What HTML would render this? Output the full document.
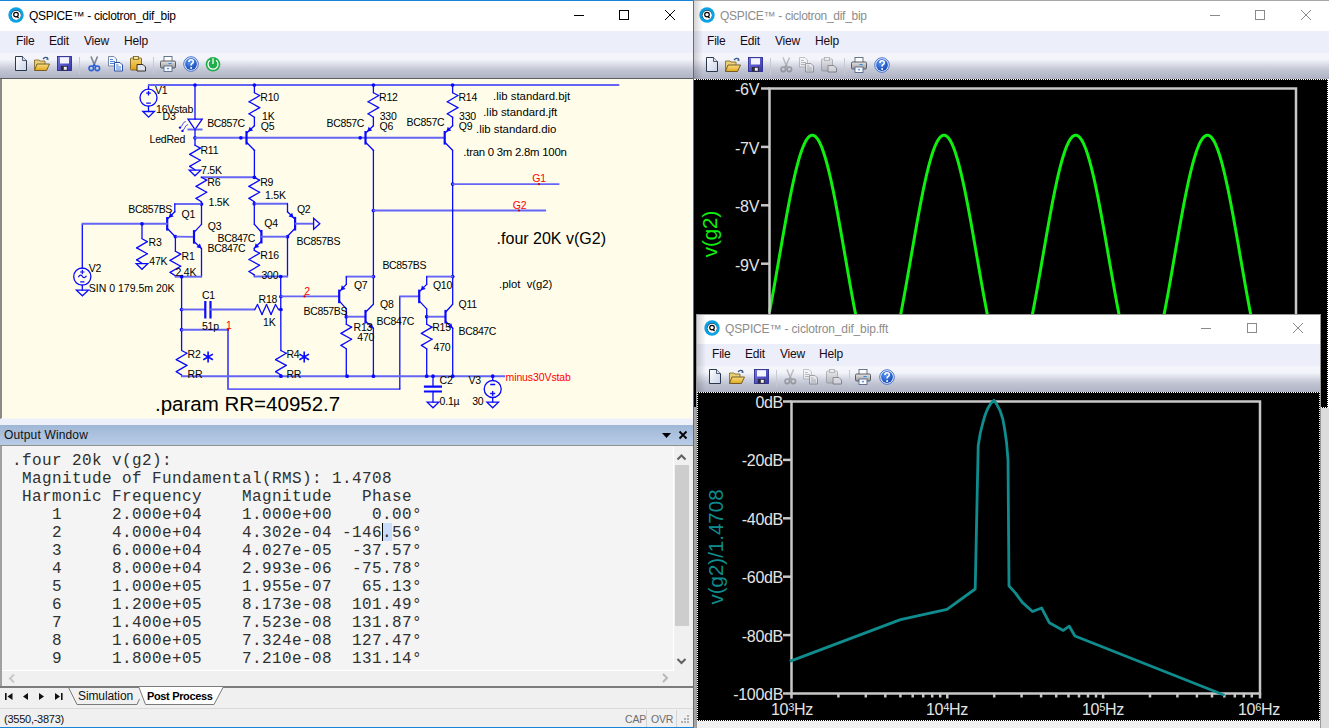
<!DOCTYPE html><html><head><meta charset="utf-8"><style>
*{margin:0;padding:0;box-sizing:border-box}
html,body{width:1329px;height:728px;overflow:hidden;background:#000;font-family:"Liberation Sans",sans-serif;position:relative}
.abs{position:absolute}
.title{position:absolute;font-size:12px;letter-spacing:-0.3px;white-space:nowrap;line-height:14px}
.menu{position:absolute;font-size:12px;letter-spacing:-0.2px;color:#1a0a14;white-space:nowrap;line-height:14px}
.toolbar{position:absolute;background:linear-gradient(#f4f6fb 0px,#f2f4fa 6.5px,#dadde7 11.5px,#c2c5d3 17px,#b1b4c5 25px)}
.mono{font-family:"Liberation Mono",monospace;font-size:16px;letter-spacing:0.4px;white-space:pre;color:#303030;position:absolute;line-height:18px}
.axl{position:absolute;color:#e4e4e4;font-size:16px;letter-spacing:-0.3px;white-space:nowrap;line-height:16px}
svg{position:absolute;overflow:visible}
</style></head><body>

<svg width="0" height="0" style="position:absolute">
<defs>
 <linearGradient id="gpage" x1="0" y1="0" x2="1" y2="1"><stop offset="0" stop-color="#ffffff"/><stop offset="1" stop-color="#c9d2e6"/></linearGradient>
 <linearGradient id="gfold" x1="0" y1="0" x2="0" y2="1"><stop offset="0" stop-color="#f7dc82"/><stop offset="1" stop-color="#e0a81c"/></linearGradient>
 <radialGradient id="ghelp" cx="0.4" cy="0.3" r="0.8"><stop offset="0" stop-color="#5a9af0"/><stop offset="1" stop-color="#0f3fb0"/></radialGradient>
 <linearGradient id="gsave" x1="0" y1="0" x2="1" y2="1"><stop offset="0" stop-color="#7a7ae0"/><stop offset="1" stop-color="#3434a8"/></linearGradient>
 <linearGradient id="gprint" x1="0" y1="0" x2="0" y2="1"><stop offset="0" stop-color="#e6e6e6"/><stop offset="1" stop-color="#9a9a9a"/></linearGradient>
 <linearGradient id="gclip" x1="0" y1="0" x2="0" y2="1"><stop offset="0" stop-color="#f4d774"/><stop offset="1" stop-color="#e3a10f"/></linearGradient>
 <symbol id="i-q" viewBox="0 0 16 16">
  <circle cx="8" cy="8" r="7.7" fill="#0aa2e4"/>
  <circle cx="8" cy="8" r="5.1" fill="#1a4a6a"/>
  <circle cx="8.2" cy="8.3" r="4.6" fill="#fff"/>
  <circle cx="8" cy="7.6" r="2.3" fill="none" stroke="#000" stroke-width="1.15"/>
  <path d="M8.9 9.3 L10.6 11" stroke="#000" stroke-width="1.2"/>
 </symbol>
 <symbol id="i-new" viewBox="0 0 16 16">
  <path d="M1.5 0.5 H8.5 L12.5 4.5 V14.5 H1.5 Z" fill="url(#gpage)" stroke="#29374f" stroke-width="1"/>
  <path d="M8.5 0.5 V4.5 H12.5" fill="#dfe5f0" stroke="#29374f" stroke-width="0.8"/>
 </symbol>
 <symbol id="i-open" viewBox="0 0 16 16">
  <path d="M0.5 4 H5 L6 5 H11 V14 H0.5 Z" fill="#e8cf7a" stroke="#8a6d2a" stroke-width="0.9"/>
  <path d="M3 8 H15.5 L12.5 14.5 H0.5 Z" fill="url(#gfold)" stroke="#6d5420" stroke-width="0.9"/>
  <path d="M9 3 Q11.5 0 14 2.5" fill="none" stroke="#3a5a8a" stroke-width="1.2"/>
  <path d="M13 1 L15 3.5 L12.5 4z" fill="#3a5a8a"/>
 </symbol>
 <symbol id="i-save" viewBox="0 0 16 16">
  <rect x="0.5" y="0.5" width="14" height="14" fill="url(#gsave)" stroke="#2e2e90" stroke-width="0.9"/>
  <rect x="3" y="1.2" width="9" height="6.3" fill="#f4f6ff"/>
  <rect x="3.8" y="10" width="7" height="4.5" fill="#2a2a3a"/>
  <rect x="6.8" y="10.8" width="3" height="3" fill="#f0f0f0"/>
 </symbol>
 <symbol id="i-cut" viewBox="0 0 16 16">
  <path d="M5 0.5 L8.5 9 M11.5 0.5 L8 9" stroke="#7b8190" stroke-width="1.6" fill="none"/>
  <circle cx="5.3" cy="12.3" r="2.3" fill="none" stroke="#2b5fd8" stroke-width="1.6"/>
  <circle cx="11.3" cy="12.3" r="2.3" fill="none" stroke="#2b5fd8" stroke-width="1.6"/>
  <path d="M6.5 10.5 L8.2 8.5 L10 10.5" stroke="#2b5fd8" stroke-width="1.4" fill="none"/>
 </symbol>
 <symbol id="i-copy" viewBox="0 0 16 16">
  <path d="M0.5 0.5 H6 L8.5 3 V10 H0.5 Z" fill="#f6f8fc" stroke="#6c7ea0" stroke-width="0.9"/>
  <path d="M2 3.5 H5 M2 5.5 H7 M2 7.5 H7" stroke="#3b78d8" stroke-width="0.9"/>
  <path d="M6.5 6.5 H12 L14.5 9 V15 H6.5 Z" fill="#f6f8fc" stroke="#2b4fa8" stroke-width="1"/>
  <path d="M8 9 H10.5 M8 11 H13 M8 13 H13" stroke="#3b78d8" stroke-width="0.9"/>
 </symbol>
 <symbol id="i-paste" viewBox="0 0 16 16">
  <rect x="0.5" y="2" width="11" height="12" rx="1" fill="url(#gclip)" stroke="#7a6020" stroke-width="0.9"/>
  <rect x="3.5" y="0.5" width="5" height="3" fill="#f4e49a" stroke="#6d5a20" stroke-width="0.8"/>
  <path d="M7 8.5 H13 L15.5 11 V15 H7 Z" fill="#dde4ef" stroke="#3a3020" stroke-width="1"/>
 </symbol>
 <symbol id="i-print" viewBox="0 0 16 16">
  <rect x="4" y="0.5" width="8" height="5" fill="#fff" stroke="#5a6a80" stroke-width="0.9"/>
  <rect x="0.5" y="5" width="15" height="7" rx="1.2" fill="url(#gprint)" stroke="#4a4e58" stroke-width="0.9"/>
  <rect x="8.5" y="7" width="3.2" height="1.1" fill="#3a8ad8"/>
  <rect x="4" y="10" width="8" height="5.5" fill="#f4f8ff" stroke="#5a6a88" stroke-width="0.9"/>
  <rect x="7.3" y="11.9" width="1.4" height="1.4" fill="#2a6ad8"/>
 </symbol>
 <symbol id="i-help" viewBox="0 0 16 16">
  <circle cx="8" cy="8" r="7.3" fill="#e8eefc" stroke="#3a66c8" stroke-width="0.9"/>
  <circle cx="8" cy="8" r="5.9" fill="url(#ghelp)"/>
  <path d="M5.9 6.1 Q5.9 3.7 8.1 3.7 Q10.3 3.7 10.3 5.8 Q10.3 7.1 8.8 7.8 Q8.1 8.2 8.1 9.6" fill="none" stroke="#fff" stroke-width="1.6"/>
  <circle cx="8.1" cy="11.9" r="1" fill="#fff"/>
 </symbol>
 <symbol id="i-power" viewBox="0 0 16 16">
  <circle cx="8" cy="8.3" r="7.3" fill="#1fae4a"/>
  <path d="M5 4.2 A5 5 0 1 0 11 4.2" fill="none" stroke="#fff" stroke-width="1.3"/>
  <path d="M8 2.2 V8" stroke="#fff" stroke-width="1.3"/>
 </symbol>
</defs></svg>

<div class="abs" style="left:694px;top:0;width:635px;height:728px;background:#fff"></div>
<div class="abs" style="left:694px;top:0;width:635px;height:1px;background:#a8a8a8"></div>
<svg style="left:699px;top:7px;opacity:1.0;" width="16" height="16" viewBox="0 0 16 16"><use href="#i-q"/></svg>
<div class="title" style="left:720px;top:9px;color:#8c8c8c">QSPICE™ - ciclotron_dif_bip</div>
<div class="abs" style="left:694px;top:31px;width:635px;height:22px;background:#eceef9"></div>
<div class="menu" style="left:707px;top:34px">File</div>
<div class="menu" style="left:740px;top:34px">Edit</div>
<div class="menu" style="left:775px;top:34px">View</div>
<div class="menu" style="left:815px;top:34px">Help</div>
<div class="toolbar" style="left:694px;top:53px;width:635px;height:26px"></div>
<div class="abs" style="left:694px;top:79px;width:634px;height:329px;background:#000;border-top:1px dotted #fff;border-right:1px dotted #fff;border-bottom:1px dotted #fff"></div>
<div class="abs" style="left:694px;top:408px;width:635px;height:320px;background:#dcdcdc"></div>
<div class="abs" style="left:694px;top:1px;width:9px;height:78px;background:linear-gradient(to right,rgba(0,0,20,0.17),rgba(0,0,20,0))"></div>
<svg style="left:0;top:0" width="1" height="1"><line x1="1210" y1="15.5" x2="1220" y2="15.5" stroke="#8a8a8a" stroke-width="1"/><rect x="1255.5" y="10.5" width="9" height="9" fill="none" stroke="#8a8a8a" stroke-width="1"/><path d="M1301 10 L1311 20 M1311 10 L1301 20" stroke="#8a8a8a" stroke-width="1"/></svg>
<svg style="left:705px;top:57px;opacity:1;" width="16" height="16" viewBox="0 0 16 16"><use href="#i-new"/></svg>
<svg style="left:725px;top:57px;opacity:1;" width="16" height="16" viewBox="0 0 16 16"><use href="#i-open"/></svg>
<svg style="left:747.5px;top:57px;opacity:1;" width="16" height="16" viewBox="0 0 16 16"><use href="#i-save"/></svg>
<svg style="left:777.5px;top:57px;opacity:0.45;filter:grayscale(1);" width="16" height="16" viewBox="0 0 16 16"><use href="#i-cut"/></svg>
<svg style="left:799px;top:57px;opacity:0.45;filter:grayscale(1);" width="16" height="16" viewBox="0 0 16 16"><use href="#i-copy"/></svg>
<svg style="left:821px;top:57px;opacity:0.45;filter:grayscale(1);" width="16" height="16" viewBox="0 0 16 16"><use href="#i-paste"/></svg>
<svg style="left:851px;top:57px;opacity:1;" width="16" height="16" viewBox="0 0 16 16"><use href="#i-print"/></svg>
<svg style="left:873.5px;top:57px;opacity:1;" width="16" height="16" viewBox="0 0 16 16"><use href="#i-help"/></svg>
<div class="abs" style="left:770px;top:58px;width:1px;height:17px;background:#c8cad2"></div>
<div class="abs" style="left:844px;top:58px;width:1px;height:17px;background:#c8cad2"></div>
<svg style="left:0;top:0" width="1" height="1">
<polyline points="769.5,311.8 770.5,306.6 771.5,301.3 772.5,295.8 773.5,290.3 774.5,284.7 775.5,279.0 776.5,273.3 777.5,267.5 778.5,261.8 779.5,256.0 780.5,250.2 781.5,244.4 782.5,238.6 783.5,232.9 784.5,227.3 785.5,221.7 786.5,216.2 787.5,210.8 788.5,205.5 789.5,200.3 790.5,195.2 791.5,190.3 792.5,185.5 793.5,180.9 794.5,176.5 795.5,172.2 796.5,168.1 797.5,164.3 798.5,160.6 799.5,157.2 800.5,154.0 801.5,151.0 802.5,148.3 803.5,145.8 804.5,143.5 805.5,141.6 806.5,139.8 807.5,138.4 808.5,137.2 809.5,136.3 810.5,135.7 811.5,135.3 812.5,135.2 813.5,135.4 814.5,135.9 815.5,136.6 816.5,137.7 817.5,138.9 818.5,140.5 819.5,142.3 820.5,144.4 821.5,146.7 822.5,149.3 823.5,152.2 824.5,155.2 825.5,158.5 826.5,162.0 827.5,165.8 828.5,169.7 829.5,173.9 830.5,178.2 831.5,182.7 832.5,187.4 833.5,192.2 834.5,197.2 835.5,202.3 836.5,207.6 837.5,212.9 838.5,218.4 839.5,223.9 840.5,229.5 841.5,235.2 842.5,240.9 843.5,246.7 844.5,252.5 845.5,258.3 846.5,264.1 847.5,269.9 848.5,275.6 849.5,281.3 850.5,286.9 851.5,292.5 852.5,298.0 853.5,303.4 854.5,308.7 855.5,313.9 856.5,318.9 857.5,323.8 858.5,328.6 859.5,333.2 860.5,337.6 861.5,341.8 862.5,345.8 863.5,349.7 864.5,353.3 865.5,356.7 866.5,359.9 867.5,362.8 868.5,365.5 869.5,368.0 870.5,370.2 871.5,372.1 872.5,373.8 873.5,375.2 874.5,376.3 875.5,377.2 876.5,377.8 877.5,378.1 878.5,378.1 879.5,377.9 880.5,377.4 881.5,376.6 882.5,375.6 883.5,374.2 884.5,372.6 885.5,370.8 886.5,368.7 887.5,366.3 888.5,363.7 889.5,360.8 890.5,357.7 891.5,354.3 892.5,350.8 893.5,347.0 894.5,343.0 895.5,338.9 896.5,334.5 897.5,330.0 898.5,325.3 899.5,320.4 900.5,315.4 901.5,310.3 902.5,305.0 903.5,299.6 904.5,294.2 905.5,288.6 906.5,283.0 907.5,277.3 908.5,271.6 909.5,265.8 910.5,260.0 911.5,254.2 912.5,248.4 913.5,242.7 914.5,236.9 915.5,231.2 916.5,225.6 917.5,220.0 918.5,214.6 919.5,209.2 920.5,203.9 921.5,198.7 922.5,193.7 923.5,188.8 924.5,184.1 925.5,179.5 926.5,175.2 927.5,171.0 928.5,166.9 929.5,163.1 930.5,159.6 931.5,156.2 932.5,153.0 933.5,150.1 934.5,147.5 935.5,145.1 936.5,142.9 937.5,141.0 938.5,139.4 939.5,138.0 940.5,136.9 941.5,136.1 942.5,135.5 943.5,135.3 944.5,135.3 945.5,135.5 946.5,136.1 947.5,136.9 948.5,138.0 949.5,139.4 950.5,141.0 951.5,142.9 952.5,145.1 953.5,147.5 954.5,150.1 955.5,153.0 956.5,156.2 957.5,159.6 958.5,163.1 959.5,166.9 960.5,171.0 961.5,175.2 962.5,179.5 963.5,184.1 964.5,188.8 965.5,193.7 966.5,198.7 967.5,203.9 968.5,209.2 969.5,214.6 970.5,220.0 971.5,225.6 972.5,231.2 973.5,236.9 974.5,242.7 975.5,248.4 976.5,254.2 977.5,260.0 978.5,265.8 979.5,271.6 980.5,277.3 981.5,283.0 982.5,288.6 983.5,294.2 984.5,299.6 985.5,305.0 986.5,310.3 987.5,315.4 988.5,320.4 989.5,325.3 990.5,330.0 991.5,334.5 992.5,338.9 993.5,343.0 994.5,347.0 995.5,350.8 996.5,354.3 997.5,357.7 998.5,360.8 999.5,363.7 1000.5,366.3 1001.5,368.7 1002.5,370.8 1003.5,372.6 1004.5,374.2 1005.5,375.6 1006.5,376.6 1007.5,377.4 1008.5,377.9 1009.5,378.1 1010.5,378.1 1011.5,377.8 1012.5,377.2 1013.5,376.3 1014.5,375.2 1015.5,373.8 1016.5,372.1 1017.5,370.2 1018.5,368.0 1019.5,365.5 1020.5,362.8 1021.5,359.9 1022.5,356.7 1023.5,353.3 1024.5,349.7 1025.5,345.8 1026.5,341.8 1027.5,337.6 1028.5,333.2 1029.5,328.6 1030.5,323.8 1031.5,318.9 1032.5,313.9 1033.5,308.7 1034.5,303.4 1035.5,298.0 1036.5,292.5 1037.5,286.9 1038.5,281.3 1039.5,275.6 1040.5,269.9 1041.5,264.1 1042.5,258.3 1043.5,252.5 1044.5,246.7 1045.5,240.9 1046.5,235.2 1047.5,229.5 1048.5,223.9 1049.5,218.4 1050.5,212.9 1051.5,207.6 1052.5,202.3 1053.5,197.2 1054.5,192.2 1055.5,187.4 1056.5,182.7 1057.5,178.2 1058.5,173.9 1059.5,169.7 1060.5,165.8 1061.5,162.0 1062.5,158.5 1063.5,155.2 1064.5,152.2 1065.5,149.3 1066.5,146.7 1067.5,144.4 1068.5,142.3 1069.5,140.5 1070.5,138.9 1071.5,137.7 1072.5,136.6 1073.5,135.9 1074.5,135.4 1075.5,135.2 1076.5,135.3 1077.5,135.7 1078.5,136.3 1079.5,137.2 1080.5,138.4 1081.5,139.8 1082.5,141.6 1083.5,143.5 1084.5,145.8 1085.5,148.3 1086.5,151.0 1087.5,154.0 1088.5,157.2 1089.5,160.6 1090.5,164.3 1091.5,168.1 1092.5,172.2 1093.5,176.5 1094.5,180.9 1095.5,185.5 1096.5,190.3 1097.5,195.2 1098.5,200.3 1099.5,205.5 1100.5,210.8 1101.5,216.2 1102.5,221.7 1103.5,227.3 1104.5,232.9 1105.5,238.6 1106.5,244.4 1107.5,250.2 1108.5,256.0 1109.5,261.8 1110.5,267.5 1111.5,273.3 1112.5,279.0 1113.5,284.7 1114.5,290.3 1115.5,295.8 1116.5,301.3 1117.5,306.6 1118.5,311.8 1119.5,316.9 1120.5,321.9 1121.5,326.7 1122.5,331.4 1123.5,335.8 1124.5,340.1 1125.5,344.3 1126.5,348.2 1127.5,351.9 1128.5,355.4 1129.5,358.6 1130.5,361.7 1131.5,364.5 1132.5,367.0 1133.5,369.3 1134.5,371.4 1135.5,373.1 1136.5,374.7 1137.5,375.9 1138.5,376.9 1139.5,377.6 1140.5,378.0 1141.5,378.2 1142.5,378.0 1143.5,377.6 1144.5,377.0 1145.5,376.0 1146.5,374.8 1147.5,373.3 1148.5,371.5 1149.5,369.5 1150.5,367.3 1151.5,364.7 1152.5,362.0 1153.5,359.0 1154.5,355.7 1155.5,352.2 1156.5,348.6 1157.5,344.7 1158.5,340.6 1159.5,336.3 1160.5,331.8 1161.5,327.2 1162.5,322.4 1163.5,317.4 1164.5,312.3 1165.5,307.1 1166.5,301.8 1167.5,296.4 1168.5,290.9 1169.5,285.3 1170.5,279.6 1171.5,273.9 1172.5,268.1 1173.5,262.3 1174.5,256.5 1175.5,250.8 1176.5,245.0 1177.5,239.2 1178.5,233.5 1179.5,227.8 1180.5,222.3 1181.5,216.7 1182.5,211.3 1183.5,206.0 1184.5,200.8 1185.5,195.7 1186.5,190.8 1187.5,186.0 1188.5,181.3 1189.5,176.9 1190.5,172.6 1191.5,168.5 1192.5,164.6 1193.5,161.0 1194.5,157.5 1195.5,154.3 1196.5,151.3 1197.5,148.5 1198.5,146.0 1199.5,143.7 1200.5,141.7 1201.5,140.0 1202.5,138.5 1203.5,137.3 1204.5,136.4 1205.5,135.7 1206.5,135.3 1207.5,135.2 1208.5,135.4 1209.5,135.8 1210.5,136.5 1211.5,137.5 1212.5,138.8 1213.5,140.3 1214.5,142.1 1215.5,144.2 1216.5,146.5 1217.5,149.1 1218.5,151.9 1219.5,154.9 1220.5,158.2 1221.5,161.7 1222.5,165.4 1223.5,169.3 1224.5,173.5 1225.5,177.8 1226.5,182.3 1227.5,186.9 1228.5,191.7 1229.5,196.7 1230.5,201.8 1231.5,207.0 1232.5,212.4 1233.5,217.8 1234.5,223.4 1235.5,229.0 1236.5,234.6 1237.5,240.4 1238.5,246.1 1239.5,251.9 1240.5,257.7 1241.5,263.5 1242.5,269.3 1243.5,275.0 1244.5,280.7 1245.5,286.4 1246.5,292.0 1247.5,297.5 1248.5,302.9 1249.5,308.2 1250.5,313.4 1251.5,318.4 1252.5,323.3 1253.5,328.1 1254.5,332.7 1255.5,337.2 1256.5,341.4 1257.5,345.5 1258.5,349.3 1259.5,353.0 1260.5,356.4 1261.5,359.6 1262.5,362.5 1263.5,365.3 1264.5,367.7 1265.5,370.0 1266.5,371.9 1267.5,373.6 1268.5,375.1 1269.5,376.2 1270.5,377.1 1271.5,377.7 1272.5,378.1 1273.5,378.2 1274.5,377.9 1275.5,377.5 1276.5,376.7 1277.5,375.7 1278.5,374.4 1279.5,372.8 1280.5,371.0 1281.5,368.9 1282.5,366.5 1283.5,363.9 1284.5,361.1 1285.5,358.0 1286.5,354.7 1287.5,351.2 1288.5,347.4 1289.5,343.5 1290.5,339.3 1291.5,335.0 1292.5,330.4 1293.5,325.8 1294.5,320.9 1295.5,315.9" fill="none" stroke="#10f010" stroke-width="3" stroke-linejoin="round"/>
<path d="M769.5 330 V88.5 H1296 V330" fill="none" stroke="#c8c8c8" stroke-width="2.5"/>
<line x1="761" y1="88.5" x2="769.5" y2="88.5" stroke="#c8c8c8" stroke-width="2.5"/>
<line x1="761" y1="146.9" x2="769.5" y2="146.9" stroke="#c8c8c8" stroke-width="2.5"/>
<line x1="761" y1="205.3" x2="769.5" y2="205.3" stroke="#c8c8c8" stroke-width="2.5"/>
<line x1="761" y1="263.7" x2="769.5" y2="263.7" stroke="#c8c8c8" stroke-width="2.5"/>
<line x1="761" y1="322.1" x2="769.5" y2="322.1" stroke="#c8c8c8" stroke-width="2.5"/>
</svg>
<div class="axl" style="right:570px;top:82px;text-align:right">-6V</div>
<div class="axl" style="right:570px;top:141px;text-align:right">-7V</div>
<div class="axl" style="right:570px;top:199px;text-align:right">-8V</div>
<div class="axl" style="right:570px;top:258px;text-align:right">-9V</div>
<div class="abs" style="left:700px;top:234px;width:20px;height:1px"><div style="position:absolute;left:-30px;top:-10px;width:80px;text-align:center;transform:rotate(-90deg);color:#10f010;font-size:20.5px;line-height:20px;white-space:nowrap">v(g2)</div></div>
<div class="abs" style="left:0;top:0;width:694px;height:728px;background:#fff"></div>
<div class="abs" style="left:0;top:0;width:694px;height:1px;background:#1883d7"></div>
<div class="abs" style="left:693px;top:0;width:1px;height:728px;background:#1883d7"></div>
<div class="abs" style="left:0;top:727px;width:694px;height:1px;background:#1883d7"></div>
<svg style="left:8px;top:7px;opacity:1.0;" width="16" height="16" viewBox="0 0 16 16"><use href="#i-q"/></svg>
<div class="title" style="left:29px;top:9px;color:#000">QSPICE™ - ciclotron_dif_bip</div>
<svg style="left:0;top:0" width="1" height="1"><line x1="574" y1="15.5" x2="584" y2="15.5" stroke="#000" stroke-width="1"/><rect x="619.5" y="10.5" width="9" height="9" fill="none" stroke="#000" stroke-width="1"/><path d="M665 10 L675 20 M675 10 L665 20" stroke="#000" stroke-width="1"/></svg>
<div class="abs" style="left:0;top:31px;width:693px;height:22px;background:#eceef9"></div>
<div class="menu" style="left:16px;top:34px">File</div>
<div class="menu" style="left:49px;top:34px">Edit</div>
<div class="menu" style="left:84px;top:34px">View</div>
<div class="menu" style="left:124px;top:34px">Help</div>
<div class="toolbar" style="left:0;top:53px;width:693px;height:25px"></div>
<div class="abs" style="left:0;top:78px;width:693px;height:1px;background:#5e5e62"></div>
<svg style="left:13.5px;top:56px;opacity:1.0;" width="16" height="16" viewBox="0 0 16 16"><use href="#i-new"/></svg>
<svg style="left:34px;top:56px;opacity:1.0;" width="16" height="16" viewBox="0 0 16 16"><use href="#i-open"/></svg>
<svg style="left:56.5px;top:56px;opacity:1.0;" width="16" height="16" viewBox="0 0 16 16"><use href="#i-save"/></svg>
<svg style="left:86px;top:56px;opacity:1.0;" width="16" height="16" viewBox="0 0 16 16"><use href="#i-cut"/></svg>
<svg style="left:107.5px;top:56px;opacity:1.0;" width="16" height="16" viewBox="0 0 16 16"><use href="#i-copy"/></svg>
<svg style="left:129.5px;top:56px;opacity:1.0;" width="16" height="16" viewBox="0 0 16 16"><use href="#i-paste"/></svg>
<svg style="left:159.5px;top:56px;opacity:1.0;" width="16" height="16" viewBox="0 0 16 16"><use href="#i-print"/></svg>
<svg style="left:182.5px;top:56px;opacity:1.0;" width="16" height="16" viewBox="0 0 16 16"><use href="#i-help"/></svg>
<svg style="left:204.5px;top:56px;opacity:1.0;" width="16" height="16" viewBox="0 0 16 16"><use href="#i-power"/></svg>
<div class="abs" style="left:79px;top:57px;width:1px;height:17px;background:#c8cad2"></div>
<div class="abs" style="left:153px;top:57px;width:1px;height:17px;background:#c8cad2"></div>
<div class="abs" style="left:0;top:79px;width:693px;height:340px;background:#fffdea;border-left:2px solid #8a8a8a;border-right:2px solid #fbfbfb;border-bottom:1px solid #f6f6f6"></div>
<svg style="left:0;top:0" width="1" height="1" font-family="Liberation Sans, sans-serif"><line x1="148.5" y1="89.2" x2="148.5" y2="85.0" stroke="#0a0aff" stroke-width="1.3" stroke-linecap="round"/>
<line x1="148.0" y1="85.0" x2="619.3" y2="85.0" stroke="#6464f6" stroke-width="1.9"/>
<circle cx="195.0" cy="85.0" r="1.85" fill="#0a0aff"/>
<circle cx="254.4" cy="85.0" r="1.85" fill="#0a0aff"/>
<circle cx="373.4" cy="85.0" r="1.85" fill="#0a0aff"/>
<circle cx="452.6" cy="85.0" r="1.85" fill="#0a0aff"/>
<circle cx="148.5" cy="97.7" r="8.5" fill="none" stroke="#0a0aff" stroke-width="1.3"/>
<path d="M146.2 93.2 H150.8 M148.5 90.9 V95.5 M146.2 103.1 H150.8" stroke="#0a0aff" stroke-width="1.3"/>
<line x1="148.5" y1="106.2" x2="148.5" y2="111.5" stroke="#0a0aff" stroke-width="1.3" stroke-linecap="round"/>
<path d="M142.8 111.5 H154.4 L148.6 117.1 Z" fill="none" stroke="#0a0aff" stroke-width="1.3" stroke-linejoin="miter"/>
<line x1="195.0" y1="85.0" x2="195.0" y2="119.2" stroke="#0a0aff" stroke-width="1.3" stroke-linecap="round"/>
<path d="M188 119.2 H202.2 L195 129.5 Z" fill="none" stroke="#0a0aff" stroke-width="1.3"/>
<line x1="187.5" y1="129.5" x2="202.5" y2="129.5" stroke="#6464f6" stroke-width="1.9"/>
<line x1="195.0" y1="129.5" x2="195.0" y2="145.3" stroke="#0a0aff" stroke-width="1.3" stroke-linecap="round"/>
<circle cx="195.0" cy="137.8" r="1.85" fill="#0a0aff"/>
<path d="M185.8 121.5 C182.3 121.8 183.2 126 180.2 127.4 M188 124.6 C184.8 125 185.3 129 182.6 130.6" fill="none" stroke="#0a0aff" stroke-width="1" opacity="0.7"/><circle cx="180" cy="127.6" r="1.2" fill="#0a0aff"/><circle cx="182.5" cy="130.9" r="1.2" fill="#0a0aff"/>
<line x1="195.0" y1="145.3" x2="200.3" y2="148.1" stroke="#0a0aff" stroke-width="1.3" stroke-linecap="round"/>
<line x1="200.3" y1="148.1" x2="189.7" y2="154.4" stroke="#0a0aff" stroke-width="1.3" stroke-linecap="round"/>
<line x1="189.7" y1="154.4" x2="200.3" y2="160.2" stroke="#0a0aff" stroke-width="1.3" stroke-linecap="round"/>
<line x1="200.3" y1="160.2" x2="189.7" y2="166.4" stroke="#0a0aff" stroke-width="1.3" stroke-linecap="round"/>
<line x1="189.7" y1="166.4" x2="195.0" y2="169.8" stroke="#0a0aff" stroke-width="1.3" stroke-linecap="round"/>
<path d="M189.2 170.2 H200.8 L195.0 175.8 Z" fill="none" stroke="#0a0aff" stroke-width="1.3" stroke-linejoin="miter"/>
<line x1="194.5" y1="137.8" x2="445.1" y2="137.8" stroke="#6464f6" stroke-width="1.9"/>
<circle cx="240.9" cy="137.8" r="1.85" fill="#0a0aff"/>
<circle cx="360.2" cy="137.8" r="1.85" fill="#0a0aff"/>
<line x1="254.4" y1="85.0" x2="254.4" y2="92.7" stroke="#0a0aff" stroke-width="1.3" stroke-linecap="round"/>
<line x1="254.4" y1="92.7" x2="259.7" y2="95.5" stroke="#0a0aff" stroke-width="1.3" stroke-linecap="round"/>
<line x1="259.7" y1="95.5" x2="249.1" y2="101.8" stroke="#0a0aff" stroke-width="1.3" stroke-linecap="round"/>
<line x1="249.1" y1="101.8" x2="259.7" y2="107.6" stroke="#0a0aff" stroke-width="1.3" stroke-linecap="round"/>
<line x1="259.7" y1="107.6" x2="249.1" y2="113.8" stroke="#0a0aff" stroke-width="1.3" stroke-linecap="round"/>
<line x1="249.1" y1="113.8" x2="254.4" y2="117.2" stroke="#0a0aff" stroke-width="1.3" stroke-linecap="round"/>
<line x1="254.4" y1="117.2" x2="254.4" y2="125.8" stroke="#0a0aff" stroke-width="1.3" stroke-linecap="round"/>
<line x1="246.5" y1="131.0" x2="246.5" y2="144.6" stroke="#0a0aff" stroke-width="2.2"/>
<line x1="246.5" y1="133.3" x2="254.4" y2="125.8" stroke="#0a0aff" stroke-width="1.3" stroke-linecap="round"/>
<line x1="246.5" y1="142.3" x2="254.4" y2="150.3" stroke="#0a0aff" stroke-width="1.3" stroke-linecap="round"/>
<path d="M248.1 131.8 L249.6 126.8 L253.1 130.6 Z" fill="#0a0aff"/>
<line x1="373.4" y1="85.0" x2="373.4" y2="92.7" stroke="#0a0aff" stroke-width="1.3" stroke-linecap="round"/>
<line x1="373.4" y1="92.7" x2="378.7" y2="95.5" stroke="#0a0aff" stroke-width="1.3" stroke-linecap="round"/>
<line x1="378.7" y1="95.5" x2="368.1" y2="101.8" stroke="#0a0aff" stroke-width="1.3" stroke-linecap="round"/>
<line x1="368.1" y1="101.8" x2="378.7" y2="107.6" stroke="#0a0aff" stroke-width="1.3" stroke-linecap="round"/>
<line x1="378.7" y1="107.6" x2="368.1" y2="113.8" stroke="#0a0aff" stroke-width="1.3" stroke-linecap="round"/>
<line x1="368.1" y1="113.8" x2="373.4" y2="117.2" stroke="#0a0aff" stroke-width="1.3" stroke-linecap="round"/>
<line x1="373.4" y1="117.2" x2="373.4" y2="125.8" stroke="#0a0aff" stroke-width="1.3" stroke-linecap="round"/>
<line x1="365.5" y1="131.0" x2="365.5" y2="144.6" stroke="#0a0aff" stroke-width="2.2"/>
<line x1="365.5" y1="133.3" x2="373.4" y2="125.8" stroke="#0a0aff" stroke-width="1.3" stroke-linecap="round"/>
<line x1="365.5" y1="142.3" x2="373.4" y2="150.3" stroke="#0a0aff" stroke-width="1.3" stroke-linecap="round"/>
<path d="M367.1 131.8 L368.6 126.8 L372.1 130.6 Z" fill="#0a0aff"/>
<line x1="452.6" y1="85.0" x2="452.6" y2="92.7" stroke="#0a0aff" stroke-width="1.3" stroke-linecap="round"/>
<line x1="452.6" y1="92.7" x2="457.9" y2="95.5" stroke="#0a0aff" stroke-width="1.3" stroke-linecap="round"/>
<line x1="457.9" y1="95.5" x2="447.3" y2="101.8" stroke="#0a0aff" stroke-width="1.3" stroke-linecap="round"/>
<line x1="447.3" y1="101.8" x2="457.9" y2="107.6" stroke="#0a0aff" stroke-width="1.3" stroke-linecap="round"/>
<line x1="457.9" y1="107.6" x2="447.3" y2="113.8" stroke="#0a0aff" stroke-width="1.3" stroke-linecap="round"/>
<line x1="447.3" y1="113.8" x2="452.6" y2="117.2" stroke="#0a0aff" stroke-width="1.3" stroke-linecap="round"/>
<line x1="452.6" y1="117.2" x2="452.6" y2="125.8" stroke="#0a0aff" stroke-width="1.3" stroke-linecap="round"/>
<line x1="444.7" y1="131.0" x2="444.7" y2="144.6" stroke="#0a0aff" stroke-width="2.2"/>
<line x1="444.7" y1="133.3" x2="452.6" y2="125.8" stroke="#0a0aff" stroke-width="1.3" stroke-linecap="round"/>
<line x1="444.7" y1="142.3" x2="452.6" y2="150.3" stroke="#0a0aff" stroke-width="1.3" stroke-linecap="round"/>
<path d="M446.3 131.8 L447.8 126.8 L451.3 130.6 Z" fill="#0a0aff"/>
<line x1="254.4" y1="150.3" x2="254.4" y2="177.3" stroke="#0a0aff" stroke-width="1.3" stroke-linecap="round"/>
<line x1="200.7" y1="177.3" x2="254.9" y2="177.3" stroke="#6464f6" stroke-width="1.9"/>
<circle cx="254.4" cy="177.3" r="1.85" fill="#0a0aff"/>
<line x1="201.4" y1="177.3" x2="206.7" y2="180.1" stroke="#0a0aff" stroke-width="1.3" stroke-linecap="round"/>
<line x1="206.7" y1="180.1" x2="196.1" y2="186.4" stroke="#0a0aff" stroke-width="1.3" stroke-linecap="round"/>
<line x1="196.1" y1="186.4" x2="206.7" y2="192.2" stroke="#0a0aff" stroke-width="1.3" stroke-linecap="round"/>
<line x1="206.7" y1="192.2" x2="196.1" y2="198.4" stroke="#0a0aff" stroke-width="1.3" stroke-linecap="round"/>
<line x1="196.1" y1="198.4" x2="201.4" y2="201.8" stroke="#0a0aff" stroke-width="1.3" stroke-linecap="round"/>
<line x1="201.4" y1="201.8" x2="201.5" y2="204.0" stroke="#0a0aff" stroke-width="1.3" stroke-linecap="round"/>
<circle cx="201.5" cy="204.0" r="1.85" fill="#0a0aff"/>
<line x1="254.3" y1="177.3" x2="259.6" y2="180.1" stroke="#0a0aff" stroke-width="1.3" stroke-linecap="round"/>
<line x1="259.6" y1="180.1" x2="249.0" y2="186.4" stroke="#0a0aff" stroke-width="1.3" stroke-linecap="round"/>
<line x1="249.0" y1="186.4" x2="259.6" y2="192.2" stroke="#0a0aff" stroke-width="1.3" stroke-linecap="round"/>
<line x1="259.6" y1="192.2" x2="249.0" y2="198.4" stroke="#0a0aff" stroke-width="1.3" stroke-linecap="round"/>
<line x1="249.0" y1="198.4" x2="254.3" y2="201.8" stroke="#0a0aff" stroke-width="1.3" stroke-linecap="round"/>
<line x1="254.3" y1="201.8" x2="254.3" y2="203.7" stroke="#0a0aff" stroke-width="1.3" stroke-linecap="round"/>
<circle cx="254.3" cy="203.7" r="1.85" fill="#0a0aff"/>
<line x1="174.3" y1="204.0" x2="202.0" y2="204.0" stroke="#6464f6" stroke-width="1.9"/>
<line x1="174.8" y1="204.0" x2="174.8" y2="211.8" stroke="#0a0aff" stroke-width="1.3" stroke-linecap="round"/>
<line x1="167.2" y1="217.0" x2="167.2" y2="230.6" stroke="#0a0aff" stroke-width="2.2"/>
<line x1="167.2" y1="219.3" x2="174.8" y2="211.8" stroke="#0a0aff" stroke-width="1.3" stroke-linecap="round"/>
<line x1="167.2" y1="228.3" x2="174.8" y2="236.3" stroke="#0a0aff" stroke-width="1.3" stroke-linecap="round"/>
<path d="M168.7 217.8 L170.1 212.8 L173.7 216.5 Z" fill="#0a0aff"/>
<circle cx="175.4" cy="236.6" r="1.85" fill="#0a0aff"/>
<line x1="174.9" y1="236.6" x2="194.5" y2="236.9" stroke="#6464f6" stroke-width="1.9"/>
<line x1="194.0" y1="230.1" x2="194.0" y2="243.7" stroke="#0a0aff" stroke-width="2.2"/>
<line x1="194.0" y1="232.4" x2="201.5" y2="224.4" stroke="#0a0aff" stroke-width="1.3" stroke-linecap="round"/>
<line x1="194.0" y1="241.4" x2="201.5" y2="248.4" stroke="#0a0aff" stroke-width="1.3" stroke-linecap="round"/>
<path d="M201.5 248.4 L196.4 247.2 L200.0 243.4 Z" fill="#0a0aff"/>
<line x1="201.5" y1="224.4" x2="201.5" y2="204.0" stroke="#0a0aff" stroke-width="1.3" stroke-linecap="round"/>
<line x1="201.5" y1="248.4" x2="201.5" y2="276.7" stroke="#0a0aff" stroke-width="1.3" stroke-linecap="round"/>
<line x1="175.4" y1="236.6" x2="175.4" y2="251.3" stroke="#0a0aff" stroke-width="1.3" stroke-linecap="round"/>
<line x1="175.4" y1="251.3" x2="180.7" y2="254.1" stroke="#0a0aff" stroke-width="1.3" stroke-linecap="round"/>
<line x1="180.7" y1="254.1" x2="170.1" y2="260.4" stroke="#0a0aff" stroke-width="1.3" stroke-linecap="round"/>
<line x1="170.1" y1="260.4" x2="180.7" y2="266.2" stroke="#0a0aff" stroke-width="1.3" stroke-linecap="round"/>
<line x1="180.7" y1="266.2" x2="170.1" y2="272.4" stroke="#0a0aff" stroke-width="1.3" stroke-linecap="round"/>
<line x1="170.1" y1="272.4" x2="175.4" y2="275.8" stroke="#0a0aff" stroke-width="1.3" stroke-linecap="round"/>
<line x1="175.4" y1="275.8" x2="175.4" y2="276.7" stroke="#0a0aff" stroke-width="1.3" stroke-linecap="round"/>
<line x1="174.9" y1="276.7" x2="202.0" y2="276.7" stroke="#6464f6" stroke-width="1.9"/>
<circle cx="181.6" cy="276.7" r="1.85" fill="#0a0aff"/>
<line x1="82.3" y1="268.0" x2="82.3" y2="223.8" stroke="#0a0aff" stroke-width="1.3" stroke-linecap="round"/>
<line x1="81.8" y1="223.8" x2="167.7" y2="223.8" stroke="#6464f6" stroke-width="1.9"/>
<circle cx="142.0" cy="223.8" r="1.85" fill="#0a0aff"/>
<line x1="142.0" y1="223.8" x2="142.0" y2="238.3" stroke="#0a0aff" stroke-width="1.3" stroke-linecap="round"/>
<line x1="142.0" y1="238.8" x2="147.3" y2="241.6" stroke="#0a0aff" stroke-width="1.3" stroke-linecap="round"/>
<line x1="147.3" y1="241.6" x2="136.7" y2="247.9" stroke="#0a0aff" stroke-width="1.3" stroke-linecap="round"/>
<line x1="136.7" y1="247.9" x2="147.3" y2="253.7" stroke="#0a0aff" stroke-width="1.3" stroke-linecap="round"/>
<line x1="147.3" y1="253.7" x2="136.7" y2="259.9" stroke="#0a0aff" stroke-width="1.3" stroke-linecap="round"/>
<line x1="136.7" y1="259.9" x2="142.0" y2="263.3" stroke="#0a0aff" stroke-width="1.3" stroke-linecap="round"/>
<path d="M136.2 263.7 H147.8 L142.0 269.3 Z" fill="none" stroke="#0a0aff" stroke-width="1.3" stroke-linejoin="miter"/>
<circle cx="82.3" cy="276.6" r="8.6" fill="none" stroke="#0a0aff" stroke-width="1.3"/>
<path d="M80.1 272 H84.5 M82.3 269.8 V274.2 M80.2 281.8 H84.4 M78.4 277.2 C79.5 274.5 81.5 274.5 82.3 276.3 C83.1 278.1 85.3 278.3 86.5 275.8" fill="none" stroke="#0a0aff" stroke-width="1.2"/>
<line x1="82.3" y1="285.2" x2="82.3" y2="290.2" stroke="#0a0aff" stroke-width="1.3" stroke-linecap="round"/>
<path d="M76.4 290.2 H88.4 L82.4 295.8 Z" fill="none" stroke="#0a0aff" stroke-width="1.3"/>
<line x1="253.8" y1="203.7" x2="288.0" y2="203.7" stroke="#6464f6" stroke-width="1.9"/>
<line x1="287.5" y1="203.7" x2="287.5" y2="212.0" stroke="#0a0aff" stroke-width="1.3" stroke-linecap="round"/>
<line x1="295.1" y1="216.9" x2="295.1" y2="230.5" stroke="#0a0aff" stroke-width="2.2"/>
<line x1="295.1" y1="219.2" x2="287.5" y2="211.7" stroke="#0a0aff" stroke-width="1.3" stroke-linecap="round"/>
<line x1="295.1" y1="228.2" x2="287.5" y2="236.2" stroke="#0a0aff" stroke-width="1.3" stroke-linecap="round"/>
<path d="M293.6 217.7 L288.6 216.4 L292.2 212.7 Z" fill="#0a0aff"/>
<line x1="294.6" y1="223.7" x2="314.1" y2="223.7" stroke="#6464f6" stroke-width="1.9"/>
<path d="M313.6 218.2 L319.8 223.7 L313.6 229.2 Z" fill="none" stroke="#0a0aff" stroke-width="1.3"/>
<circle cx="287.5" cy="236.7" r="1.85" fill="#0a0aff"/>
<line x1="254.3" y1="203.7" x2="254.3" y2="224.2" stroke="#0a0aff" stroke-width="1.3" stroke-linecap="round"/>
<line x1="261.4" y1="229.9" x2="261.4" y2="243.5" stroke="#0a0aff" stroke-width="2.2"/>
<line x1="261.4" y1="232.2" x2="254.3" y2="224.2" stroke="#0a0aff" stroke-width="1.3" stroke-linecap="round"/>
<line x1="261.4" y1="241.2" x2="254.3" y2="248.2" stroke="#0a0aff" stroke-width="1.3" stroke-linecap="round"/>
<path d="M254.3 248.2 L255.7 243.2 L259.3 246.9 Z" fill="#0a0aff"/>
<line x1="260.9" y1="236.7" x2="288.0" y2="236.7" stroke="#6464f6" stroke-width="1.9"/>
<line x1="287.5" y1="236.2" x2="287.5" y2="276.5" stroke="#0a0aff" stroke-width="1.3" stroke-linecap="round"/>
<line x1="254.3" y1="250.4" x2="259.6" y2="253.2" stroke="#0a0aff" stroke-width="1.3" stroke-linecap="round"/>
<line x1="259.6" y1="253.2" x2="249.0" y2="259.5" stroke="#0a0aff" stroke-width="1.3" stroke-linecap="round"/>
<line x1="249.0" y1="259.5" x2="259.6" y2="265.3" stroke="#0a0aff" stroke-width="1.3" stroke-linecap="round"/>
<line x1="259.6" y1="265.3" x2="249.0" y2="271.5" stroke="#0a0aff" stroke-width="1.3" stroke-linecap="round"/>
<line x1="249.0" y1="271.5" x2="254.3" y2="274.9" stroke="#0a0aff" stroke-width="1.3" stroke-linecap="round"/>
<line x1="254.3" y1="248.2" x2="254.3" y2="250.4" stroke="#0a0aff" stroke-width="1.3" stroke-linecap="round"/>
<line x1="254.3" y1="274.9" x2="254.3" y2="276.5" stroke="#0a0aff" stroke-width="1.3" stroke-linecap="round"/>
<line x1="253.8" y1="276.5" x2="288.0" y2="276.5" stroke="#6464f6" stroke-width="1.9"/>
<circle cx="280.7" cy="276.5" r="1.85" fill="#0a0aff"/>
<line x1="181.6" y1="276.7" x2="181.6" y2="350.0" stroke="#0a0aff" stroke-width="1.3" stroke-linecap="round"/>
<circle cx="181.6" cy="309.5" r="1.85" fill="#0a0aff"/>
<circle cx="181.6" cy="329.7" r="1.85" fill="#0a0aff"/>
<line x1="181.1" y1="309.5" x2="205.8" y2="309.5" stroke="#6464f6" stroke-width="1.9"/>
<path d="M205.3 300.9 V318.5 M210.5 300.9 V318.5" stroke="#0a0aff" stroke-width="2.2"/>
<line x1="210.0" y1="309.5" x2="255.3" y2="309.5" stroke="#6464f6" stroke-width="1.9"/>
<line x1="254.8" y1="309.5" x2="257.5" y2="304.5" stroke="#0a0aff" stroke-width="1.3" stroke-linecap="round"/>
<line x1="257.5" y1="304.5" x2="262.0" y2="314.5" stroke="#0a0aff" stroke-width="1.3" stroke-linecap="round"/>
<line x1="262.0" y1="314.5" x2="266.5" y2="304.5" stroke="#0a0aff" stroke-width="1.3" stroke-linecap="round"/>
<line x1="266.5" y1="304.5" x2="271.0" y2="314.5" stroke="#0a0aff" stroke-width="1.3" stroke-linecap="round"/>
<line x1="271.0" y1="314.5" x2="275.5" y2="304.5" stroke="#0a0aff" stroke-width="1.3" stroke-linecap="round"/>
<line x1="275.5" y1="304.5" x2="278.5" y2="309.5" stroke="#0a0aff" stroke-width="1.3" stroke-linecap="round"/>
<line x1="278.5" y1="309.5" x2="280.9" y2="309.5" stroke="#0a0aff" stroke-width="1.3" stroke-linecap="round"/>
<circle cx="280.9" cy="309.5" r="1.85" fill="#0a0aff"/>
<line x1="181.1" y1="329.7" x2="228.5" y2="329.7" stroke="#6464f6" stroke-width="1.9"/>
<line x1="228.0" y1="329.7" x2="228.0" y2="389.1" stroke="#0a0aff" stroke-width="1.3" stroke-linecap="round"/>
<line x1="227.5" y1="389.1" x2="400.3" y2="389.1" stroke="#6464f6" stroke-width="1.9"/>
<line x1="399.8" y1="389.1" x2="399.8" y2="296.4" stroke="#0a0aff" stroke-width="1.3" stroke-linecap="round"/>
<line x1="399.3" y1="296.4" x2="419.7" y2="296.4" stroke="#6464f6" stroke-width="1.9"/>
<line x1="181.6" y1="350.5" x2="186.9" y2="353.3" stroke="#0a0aff" stroke-width="1.3" stroke-linecap="round"/>
<line x1="186.9" y1="353.3" x2="176.3" y2="359.6" stroke="#0a0aff" stroke-width="1.3" stroke-linecap="round"/>
<line x1="176.3" y1="359.6" x2="186.9" y2="365.4" stroke="#0a0aff" stroke-width="1.3" stroke-linecap="round"/>
<line x1="186.9" y1="365.4" x2="176.3" y2="371.6" stroke="#0a0aff" stroke-width="1.3" stroke-linecap="round"/>
<line x1="176.3" y1="371.6" x2="181.6" y2="375.0" stroke="#0a0aff" stroke-width="1.3" stroke-linecap="round"/>
<line x1="181.6" y1="375.0" x2="181.6" y2="376.2" stroke="#0a0aff" stroke-width="1.3" stroke-linecap="round"/>
<line x1="181.1" y1="376.2" x2="505.2" y2="376.2" stroke="#6464f6" stroke-width="1.9"/>
<line x1="280.7" y1="276.5" x2="280.9" y2="350.5" stroke="#0a0aff" stroke-width="1.3" stroke-linecap="round"/>
<circle cx="280.9" cy="296.5" r="1.85" fill="#0a0aff"/>
<line x1="280.9" y1="350.5" x2="286.2" y2="353.3" stroke="#0a0aff" stroke-width="1.3" stroke-linecap="round"/>
<line x1="286.2" y1="353.3" x2="275.6" y2="359.6" stroke="#0a0aff" stroke-width="1.3" stroke-linecap="round"/>
<line x1="275.6" y1="359.6" x2="286.2" y2="365.4" stroke="#0a0aff" stroke-width="1.3" stroke-linecap="round"/>
<line x1="286.2" y1="365.4" x2="275.6" y2="371.6" stroke="#0a0aff" stroke-width="1.3" stroke-linecap="round"/>
<line x1="275.6" y1="371.6" x2="280.9" y2="375.0" stroke="#0a0aff" stroke-width="1.3" stroke-linecap="round"/>
<line x1="280.9" y1="375.0" x2="280.9" y2="376.2" stroke="#0a0aff" stroke-width="1.3" stroke-linecap="round"/>
<circle cx="280.9" cy="376.2" r="1.85" fill="#0a0aff"/>
<line x1="280.4" y1="296.4" x2="339.7" y2="296.4" stroke="#6464f6" stroke-width="1.9"/>
<path d="M208.1 351.4 V362.4 M203.29999999999998 354.09999999999997 L212.9 359.7 M203.29999999999998 359.7 L212.9 354.09999999999997" stroke="#0a0aff" stroke-width="1.6"/>
<path d="M304.2 351.4 V362.4 M299.4 354.09999999999997 L309.0 359.7 M299.4 359.7 L309.0 354.09999999999997" stroke="#0a0aff" stroke-width="1.6"/>
<line x1="373.4" y1="150.3" x2="373.4" y2="303.7" stroke="#0a0aff" stroke-width="1.3" stroke-linecap="round"/>
<circle cx="373.4" cy="210.5" r="1.85" fill="#0a0aff"/>
<circle cx="373.4" cy="276.6" r="1.85" fill="#0a0aff"/>
<line x1="372.9" y1="210.5" x2="546.1" y2="210.5" stroke="#6464f6" stroke-width="1.9"/>
<line x1="452.6" y1="150.3" x2="452.7" y2="303.7" stroke="#0a0aff" stroke-width="1.3" stroke-linecap="round"/>
<circle cx="452.7" cy="184.1" r="1.85" fill="#0a0aff"/>
<circle cx="452.7" cy="276.6" r="1.85" fill="#0a0aff"/>
<line x1="452.2" y1="184.1" x2="559.4" y2="184.1" stroke="#6464f6" stroke-width="1.9"/>
<line x1="345.8" y1="276.6" x2="373.9" y2="276.6" stroke="#6464f6" stroke-width="1.9"/>
<line x1="346.3" y1="276.6" x2="346.3" y2="284.4" stroke="#0a0aff" stroke-width="1.3" stroke-linecap="round"/>
<line x1="339.2" y1="289.6" x2="339.2" y2="303.2" stroke="#0a0aff" stroke-width="2.2"/>
<line x1="339.2" y1="291.9" x2="346.3" y2="284.4" stroke="#0a0aff" stroke-width="1.3" stroke-linecap="round"/>
<line x1="339.2" y1="300.9" x2="346.3" y2="308.9" stroke="#0a0aff" stroke-width="1.3" stroke-linecap="round"/>
<path d="M340.6 290.4 L341.8 285.3 L345.6 288.9 Z" fill="#0a0aff"/>
<line x1="346.3" y1="308.9" x2="346.3" y2="316.7" stroke="#0a0aff" stroke-width="1.3" stroke-linecap="round"/>
<circle cx="346.3" cy="316.7" r="1.85" fill="#0a0aff"/>
<line x1="345.8" y1="316.7" x2="366.0" y2="316.7" stroke="#6464f6" stroke-width="1.9"/>
<line x1="365.5" y1="309.9" x2="365.5" y2="323.5" stroke="#0a0aff" stroke-width="2.2"/>
<line x1="365.5" y1="312.2" x2="373.4" y2="304.2" stroke="#0a0aff" stroke-width="1.3" stroke-linecap="round"/>
<line x1="365.5" y1="321.2" x2="373.4" y2="328.2" stroke="#0a0aff" stroke-width="1.3" stroke-linecap="round"/>
<path d="M373.4 328.2 L368.3 327.2 L371.8 323.3 Z" fill="#0a0aff"/>
<line x1="346.3" y1="316.7" x2="346.3" y2="324.3" stroke="#0a0aff" stroke-width="1.3" stroke-linecap="round"/>
<line x1="346.3" y1="324.3" x2="351.6" y2="327.1" stroke="#0a0aff" stroke-width="1.3" stroke-linecap="round"/>
<line x1="351.6" y1="327.1" x2="341.0" y2="333.4" stroke="#0a0aff" stroke-width="1.3" stroke-linecap="round"/>
<line x1="341.0" y1="333.4" x2="351.6" y2="339.2" stroke="#0a0aff" stroke-width="1.3" stroke-linecap="round"/>
<line x1="351.6" y1="339.2" x2="341.0" y2="345.4" stroke="#0a0aff" stroke-width="1.3" stroke-linecap="round"/>
<line x1="341.0" y1="345.4" x2="346.3" y2="348.8" stroke="#0a0aff" stroke-width="1.3" stroke-linecap="round"/>
<line x1="346.3" y1="348.8" x2="346.3" y2="376.2" stroke="#0a0aff" stroke-width="1.3" stroke-linecap="round"/>
<line x1="373.4" y1="328.2" x2="373.4" y2="376.2" stroke="#0a0aff" stroke-width="1.3" stroke-linecap="round"/>
<circle cx="373.4" cy="376.2" r="1.85" fill="#0a0aff"/>
<line x1="426.2" y1="276.6" x2="453.2" y2="276.6" stroke="#6464f6" stroke-width="1.9"/>
<line x1="426.7" y1="276.6" x2="426.7" y2="284.4" stroke="#0a0aff" stroke-width="1.3" stroke-linecap="round"/>
<line x1="419.2" y1="289.6" x2="419.2" y2="303.2" stroke="#0a0aff" stroke-width="2.2"/>
<line x1="419.2" y1="291.9" x2="426.7" y2="284.4" stroke="#0a0aff" stroke-width="1.3" stroke-linecap="round"/>
<line x1="419.2" y1="300.9" x2="426.7" y2="308.9" stroke="#0a0aff" stroke-width="1.3" stroke-linecap="round"/>
<path d="M420.7 290.4 L422.0 285.4 L425.7 289.1 Z" fill="#0a0aff"/>
<line x1="426.7" y1="308.9" x2="426.7" y2="316.7" stroke="#0a0aff" stroke-width="1.3" stroke-linecap="round"/>
<circle cx="426.7" cy="316.7" r="1.85" fill="#0a0aff"/>
<line x1="426.2" y1="316.7" x2="446.0" y2="316.7" stroke="#6464f6" stroke-width="1.9"/>
<line x1="445.5" y1="309.9" x2="445.5" y2="323.5" stroke="#0a0aff" stroke-width="2.2"/>
<line x1="445.5" y1="312.2" x2="452.7" y2="304.2" stroke="#0a0aff" stroke-width="1.3" stroke-linecap="round"/>
<line x1="445.5" y1="321.2" x2="452.7" y2="328.2" stroke="#0a0aff" stroke-width="1.3" stroke-linecap="round"/>
<path d="M452.7 328.2 L447.7 326.9 L451.3 323.2 Z" fill="#0a0aff"/>
<line x1="426.7" y1="316.7" x2="426.7" y2="324.3" stroke="#0a0aff" stroke-width="1.3" stroke-linecap="round"/>
<line x1="426.7" y1="324.3" x2="432.0" y2="327.1" stroke="#0a0aff" stroke-width="1.3" stroke-linecap="round"/>
<line x1="432.0" y1="327.1" x2="421.4" y2="333.4" stroke="#0a0aff" stroke-width="1.3" stroke-linecap="round"/>
<line x1="421.4" y1="333.4" x2="432.0" y2="339.2" stroke="#0a0aff" stroke-width="1.3" stroke-linecap="round"/>
<line x1="432.0" y1="339.2" x2="421.4" y2="345.4" stroke="#0a0aff" stroke-width="1.3" stroke-linecap="round"/>
<line x1="421.4" y1="345.4" x2="426.7" y2="348.8" stroke="#0a0aff" stroke-width="1.3" stroke-linecap="round"/>
<line x1="426.7" y1="348.8" x2="426.7" y2="376.2" stroke="#0a0aff" stroke-width="1.3" stroke-linecap="round"/>
<line x1="452.7" y1="328.2" x2="452.7" y2="376.2" stroke="#0a0aff" stroke-width="1.3" stroke-linecap="round"/>
<circle cx="452.7" cy="376.2" r="1.85" fill="#0a0aff"/>
<circle cx="347.1" cy="376.2" r="1.85" fill="#0a0aff"/>
<circle cx="426.7" cy="376.2" r="1.85" fill="#0a0aff"/>
<circle cx="433.0" cy="376.2" r="1.85" fill="#0a0aff"/>
<line x1="433.0" y1="376.2" x2="433.0" y2="386.6" stroke="#0a0aff" stroke-width="1.3" stroke-linecap="round"/>
<path d="M423.9 386.6 H442 M423.9 391.5 H442" stroke="#0a0aff" stroke-width="2.2"/>
<line x1="433.0" y1="391.5" x2="433.0" y2="402.2" stroke="#0a0aff" stroke-width="1.3" stroke-linecap="round"/>
<path d="M427.2 402.2 H438.8 L433.0 407.8 Z" fill="none" stroke="#0a0aff" stroke-width="1.3" stroke-linejoin="miter"/>
<circle cx="492.7" cy="376.2" r="1.85" fill="#0a0aff"/>
<line x1="492.7" y1="376.2" x2="492.7" y2="380.4" stroke="#0a0aff" stroke-width="1.3" stroke-linecap="round"/>
<circle cx="492.7" cy="389" r="8.5" fill="none" stroke="#0a0aff" stroke-width="1.3"/>
<path d="M490.2 384.5 H495.2 M490.2 393.5 H495.2 M492.7 391 V396" stroke="#0a0aff" stroke-width="1.3"/>
<line x1="492.7" y1="397.5" x2="492.7" y2="402.2" stroke="#0a0aff" stroke-width="1.3" stroke-linecap="round"/>
<path d="M486.9 402.2 H498.5 L492.7 407.8 Z" fill="none" stroke="#0a0aff" stroke-width="1.3" stroke-linejoin="miter"/>
<circle cx="539" cy="184.1" r="1.1" fill="#c00"/>
<circle cx="519" cy="210.5" r="1.1" fill="#c00"/>
<circle cx="304.5" cy="296.4" r="1.1" fill="#c00"/>
<circle cx="228" cy="329.7" r="1.1" fill="#c00"/>
<text x="155.0" y="93.6" font-size="10.5" fill="#000" letter-spacing="-0.2">V1</text>
<text x="156.0" y="113.4" font-size="10.5" fill="#000" letter-spacing="-0.2">16Vstab</text>
<text x="162.6" y="120.0" font-size="10.5" fill="#000" letter-spacing="-0.2">D3</text>
<text x="149.5" y="143.4" font-size="10.5" fill="#000" letter-spacing="-0.2">LedRed</text>
<text x="207.2" y="126.5" font-size="10.5" fill="#000" letter-spacing="-0.35">BC857C</text>
<text x="260.3" y="100.8" font-size="10.5" fill="#000" letter-spacing="-0.2">R10</text>
<text x="262.0" y="120.3" font-size="10.5" fill="#000" letter-spacing="-0.2">1K</text>
<text x="260.7" y="130.3" font-size="10.5" fill="#000" letter-spacing="-0.2">Q5</text>
<text x="326.5" y="126.5" font-size="10.5" fill="#000" letter-spacing="-0.35">BC857C</text>
<text x="379.0" y="100.8" font-size="10.5" fill="#000" letter-spacing="-0.2">R12</text>
<text x="379.7" y="120.3" font-size="10.5" fill="#000" letter-spacing="-0.2">330</text>
<text x="379.5" y="130.3" font-size="10.5" fill="#000" letter-spacing="-0.2">Q6</text>
<text x="406.6" y="126.3" font-size="10.5" fill="#000" letter-spacing="-0.35">BC857C</text>
<text x="458.4" y="100.8" font-size="10.5" fill="#000" letter-spacing="-0.2">R14</text>
<text x="459.0" y="120.3" font-size="10.5" fill="#000" letter-spacing="-0.2">330</text>
<text x="458.7" y="130.3" font-size="10.5" fill="#000" letter-spacing="-0.2">Q9</text>
<text x="200.4" y="153.7" font-size="10.5" fill="#000" letter-spacing="-0.2">R11</text>
<text x="201.0" y="173.6" font-size="10.5" fill="#000" letter-spacing="-0.2">7.5K</text>
<text x="207.3" y="186.3" font-size="10.5" fill="#000" letter-spacing="-0.2">R6</text>
<text x="208.5" y="206.4" font-size="10.5" fill="#000" letter-spacing="-0.2">1.5K</text>
<text x="260.2" y="186.3" font-size="10.5" fill="#000" letter-spacing="-0.2">R9</text>
<text x="264.9" y="199.3" font-size="10.5" fill="#000" letter-spacing="-0.2">1.5K</text>
<text x="128.3" y="212.6" font-size="10.5" fill="#000" letter-spacing="-0.35">BC857BS</text>
<text x="181.6" y="217.8" font-size="10.5" fill="#000" letter-spacing="-0.2">Q1</text>
<text x="207.7" y="229.5" font-size="10.5" fill="#000" letter-spacing="-0.2">Q3</text>
<text x="217.5" y="242.3" font-size="10.5" fill="#000" letter-spacing="-0.35">BC847C</text>
<text x="207.6" y="251.9" font-size="10.5" fill="#000" letter-spacing="-0.35">BC847C</text>
<text x="148.6" y="245.5" font-size="10.5" fill="#000" letter-spacing="-0.2">R3</text>
<text x="149.3" y="265.2" font-size="10.5" fill="#000" letter-spacing="-0.2">47K</text>
<text x="181.6" y="259.7" font-size="10.5" fill="#000" letter-spacing="-0.2">R1</text>
<text x="175.4" y="275.5" font-size="10.5" fill="#000" letter-spacing="-0.2">2.4K</text>
<text x="88.8" y="271.8" font-size="10.5" fill="#000" letter-spacing="-0.2">V2</text>
<text x="88.8" y="292.0" font-size="10.5" fill="#000" letter-spacing="0">SIN 0 179.5m 20K</text>
<text x="296.9" y="212.8" font-size="10.5" fill="#000" letter-spacing="-0.2">Q2</text>
<text x="264.2" y="226.5" font-size="10.5" fill="#000" letter-spacing="-0.2">Q4</text>
<text x="296.5" y="245.1" font-size="10.5" fill="#000" letter-spacing="-0.35">BC857BS</text>
<text x="260.3" y="259.2" font-size="10.5" fill="#000" letter-spacing="-0.2">R16</text>
<text x="261.4" y="278.7" font-size="10.5" fill="#000" letter-spacing="-0.2">300</text>
<text x="201.9" y="299.3" font-size="10.5" fill="#000" letter-spacing="-0.2">C1</text>
<text x="201.9" y="330.3" font-size="10.5" fill="#000" letter-spacing="-0.2">51p</text>
<text x="258.6" y="303.1" font-size="10.5" fill="#000" letter-spacing="-0.2">R18</text>
<text x="263.0" y="326.1" font-size="10.5" fill="#000" letter-spacing="-0.2">1K</text>
<text x="187.5" y="358.4" font-size="10.5" fill="#000" letter-spacing="-0.2">R2</text>
<text x="187.5" y="377.6" font-size="10.5" fill="#000" letter-spacing="-0.2">RR</text>
<text x="286.4" y="358.4" font-size="10.5" fill="#000" letter-spacing="-0.2">R4</text>
<text x="286.4" y="377.6" font-size="10.5" fill="#000" letter-spacing="-0.2">RR</text>
<text x="382.4" y="269.0" font-size="10.5" fill="#000" letter-spacing="-0.35">BC857BS</text>
<text x="353.9" y="288.7" font-size="10.5" fill="#000" letter-spacing="-0.2">Q7</text>
<text x="303.5" y="315.4" font-size="10.5" fill="#000" letter-spacing="-0.35">BC857BS</text>
<text x="380.0" y="307.8" font-size="10.5" fill="#000" letter-spacing="-0.2">Q8</text>
<text x="376.5" y="325.1" font-size="10.5" fill="#000" letter-spacing="-0.35">BC847C</text>
<text x="353.5" y="331.2" font-size="10.5" fill="#000" letter-spacing="-0.2">R13</text>
<text x="357.3" y="341.1" font-size="10.5" fill="#000" letter-spacing="-0.2">470</text>
<text x="432.9" y="288.7" font-size="10.5" fill="#000" letter-spacing="-0.2">Q10</text>
<text x="458.5" y="308.2" font-size="10.5" fill="#000" letter-spacing="-0.2">Q11</text>
<text x="432.2" y="331.2" font-size="10.5" fill="#000" letter-spacing="-0.2">R15</text>
<text x="433.5" y="350.5" font-size="10.5" fill="#000" letter-spacing="-0.2">470</text>
<text x="458.5" y="335.4" font-size="10.5" fill="#000" letter-spacing="-0.35">BC847C</text>
<text x="439.6" y="384.1" font-size="10.5" fill="#000" letter-spacing="-0.2">C2</text>
<text x="439.6" y="404.7" font-size="10.5" fill="#000" letter-spacing="-0.2">0.1µ</text>
<text x="468.4" y="384.1" font-size="10.5" fill="#000" letter-spacing="-0.2">V3</text>
<text x="472.2" y="404.7" font-size="10.5" fill="#000" letter-spacing="-0.2">30</text>
<text x="532.3" y="182.2" font-size="10.5" fill="#ff0000" letter-spacing="-0.1">G1</text>
<text x="512.8" y="209.1" font-size="10.5" fill="#ff0000" letter-spacing="-0.1">G2</text>
<text x="304.2" y="295.2" font-size="10.5" fill="#ff0000" letter-spacing="-0.1">2</text>
<text x="226.0" y="328.8" font-size="10.5" fill="#ff0000" letter-spacing="-0.1">1</text>
<text x="505.5" y="381.3" font-size="10.5" fill="#ff0000" letter-spacing="-0.1">minus30Vstab</text>
<text x="493.0" y="99.8" font-size="11.4" fill="#000" letter-spacing="0">.lib standard.bjt</text>
<text x="483.2" y="115.6" font-size="11.4" fill="#000" letter-spacing="0">.lib standard.jft</text>
<text x="476.0" y="132.5" font-size="11.4" fill="#000" letter-spacing="0">.lib standard.dio</text>
<text x="463.3" y="156.4" font-size="11.4" fill="#000" letter-spacing="-0.25">.tran 0 3m 2.8m 100n</text>
<text x="496.6" y="243.5" font-size="16" fill="#000" letter-spacing="0">.four 20K v(G2)</text>
<text x="499.0" y="287.7" font-size="11.3" fill="#000" letter-spacing="0">.plot&#160; v(g2)</text>
<text x="155.0" y="411.0" font-size="20.5" fill="#000" letter-spacing="0">.param RR=40952.7</text></svg>
<div class="abs" style="left:0;top:419px;width:693px;height:6px;background:#eef0f9"></div>
<div class="abs" style="left:0;top:425px;width:693px;height:20px;background:linear-gradient(#9fb7d6,#b8cce6)"></div>
<div class="abs" style="left:4px;top:428px;font-size:12px;letter-spacing:0.15px;color:#111;line-height:14px">Output Window</div>
<div class="abs" style="left:0;top:445px;width:693px;height:1px;background:#909090"></div>
<svg style="left:655px;top:425px" width="38" height="20"><path d="M7 8 h9 l-4.5 5z" fill="#000"/><path d="M24.5 6.5 l7 7 M31.5 6.5 l-7 7" stroke="#000" stroke-width="1.8"/></svg>
<div class="abs" style="left:0;top:446px;width:693px;height:262px;background:#f4f4f4;border-left:2px solid #a0a0a0"></div>
<div class="abs" style="left:382px;top:523px;width:10px;height:18px;background:#c9dcfb"></div>
<div class="abs" style="left:382px;top:523px;width:1px;height:18px;background:#000"></div>
<div class="mono" style="left:12px;top:452px">.four 20k v(g2):
 Magnitude of Fundamental(RMS): 1.4708
 Harmonic Frequency    Magnitude   Phase
    1     2.000e+04    1.000e+00    0.00°
    2     4.000e+04    4.302e-04 -146.56°
    3     6.000e+04    4.027e-05  -37.57°
    4     8.000e+04    2.993e-06  -75.78°
    5     1.000e+05    1.955e-07   65.13°
    6     1.200e+05    8.173e-08  101.49°
    7     1.400e+05    7.523e-08  131.87°
    8     1.600e+05    7.324e-08  127.47°
    9     1.800e+05    7.210e-08  131.14°</div>
<div class="abs" style="left:674px;top:446px;width:19px;height:224px;background:#f0f0f0"></div>
<div class="abs" style="left:675px;top:465px;width:14px;height:161px;background:#cdcdcd"></div>
<svg style="left:674px;top:446px" width="19" height="224"><path d="M3.5 13.5 l4 -4 l4 4" fill="none" stroke="#606060" stroke-width="2"/><path d="M3.5 213 l4 4 l4 -4" fill="none" stroke="#606060" stroke-width="2"/></svg>
<div class="abs" style="left:2px;top:670px;width:691px;height:17px;background:#f0f0f0"></div>
<div class="abs" style="left:2px;top:670px;width:672px;height:1px;background:#ffffff"></div>
<div class="abs" style="left:673px;top:447px;width:1px;height:224px;background:#ffffff"></div>
<svg style="left:0;top:670px" width="693" height="17"><path d="M14 4.5 l-4 4 l4 4" fill="none" stroke="#c8c8c8" stroke-width="2"/><path d="M663 4 l4 4 l-4 4" fill="none" stroke="#b8b8b8" stroke-width="2"/></svg>
<div class="abs" style="left:0;top:686px;width:693px;height:1px;background:#7c7c7c"></div>
<div class="abs" style="left:0;top:687px;width:693px;height:21px;background:#f0f0f0"></div>
<svg style="left:0;top:687px" width="693" height="21">
    <g fill="#111"><rect x="5" y="6" width="1.6" height="7"/><path d="M12.5 6 v7 l-5 -3.5z"/><path d="M28 6 v7 l-5 -3.5z"/><path d="M39 6 v7 l5 -3.5z"/><path d="M55 6 v7 l5 -3.5z"/><rect x="61" y="6" width="1.6" height="7"/></g>
    <path d="M68.5 0.5 L77 17.5 L137 17.5 L139.5 12" fill="#f0f0f0" stroke="#7a7a7a" stroke-width="1"/>
    <path d="M139 0.5 L145.5 17.5 L214 17.5 L223 0.5" fill="#fff" stroke="#7a7a7a" stroke-width="1"/>
    <line x1="0" y1="0.5" x2="693" y2="0.5" stroke="#7c7c7c"/>
    <line x1="139.5" y1="0.5" x2="222.5" y2="0.5" stroke="#fff"/>
  </svg>
<div class="abs" style="left:78px;top:689px;font-size:12px;letter-spacing:-0.1px;color:#111;line-height:14px">Simulation</div>
<div class="abs" style="left:147px;top:689px;font-size:11px;font-weight:bold;letter-spacing:-0.35px;color:#000;line-height:14px">Post Process</div>
<div class="abs" style="left:0;top:708px;width:693px;height:19px;background:#f0f0f0;border-top:1px solid #dadada"></div>
<div class="abs" style="left:4px;top:712px;font-size:11px;letter-spacing:-0.25px;color:#111;line-height:14px">(3550,-3873)</div>
<div class="abs" style="left:625px;top:712px;font-size:10.5px;letter-spacing:-0.2px;color:#6d6d6d;line-height:14px">CAP</div>
<div class="abs" style="left:651px;top:712px;font-size:10.5px;letter-spacing:-0.2px;color:#6d6d6d;line-height:14px">OVR</div>
<div class="abs" style="left:646px;top:710px;width:1px;height:17px;background:#d4d4d4"></div>
<div class="abs" style="left:676px;top:710px;width:1px;height:17px;background:#d4d4d4"></div>
<svg style="left:678px;top:712px" width="14" height="14"><g fill="#b0b0b0"><rect x="9" y="3" width="2" height="2"/><rect x="6" y="6" width="2" height="2"/><rect x="9" y="6" width="2" height="2"/><rect x="3" y="9" width="2" height="2"/><rect x="6" y="9" width="2" height="2"/><rect x="9" y="9" width="2" height="2"/></g></svg>
<div class="abs" style="left:694px;top:407px;width:2px;height:321px;background:#a4a4a4"></div>
<div class="abs" style="left:696px;top:314px;width:625px;height:414px;background:#fff;border:1px solid #9a9a9a;border-bottom:none"></div>
<svg style="left:704px;top:320px;opacity:1.0;" width="16" height="16" viewBox="0 0 16 16"><use href="#i-q"/></svg>
<div class="title" style="left:725px;top:322px;color:#8c8c8c;letter-spacing:-0.15px">QSPICE™ - ciclotron_dif_bip.fft</div>
<svg style="left:0;top:0" width="1" height="1"><line x1="1201" y1="328.5" x2="1211" y2="328.5" stroke="#8a8a8a" stroke-width="1"/><rect x="1247.5" y="323.5" width="9" height="9" fill="none" stroke="#8a8a8a" stroke-width="1"/><path d="M1293 323 L1303 333 M1303 323 L1293 333" stroke="#8a8a8a" stroke-width="1"/></svg>
<div class="abs" style="left:697px;top:344px;width:623px;height:22px;background:#eceef9"></div>
<div class="menu" style="left:712px;top:347px">File</div>
<div class="menu" style="left:745px;top:347px">Edit</div>
<div class="menu" style="left:780px;top:347px">View</div>
<div class="menu" style="left:819px;top:347px">Help</div>
<div class="toolbar" style="left:697px;top:366px;width:623px;height:26px"></div>
<div class="abs" style="left:697px;top:392px;width:623px;height:329px;background:#000;border:1px dotted #fff"></div>
<div class="abs" style="left:697px;top:721px;width:623px;height:7px;background:#f0f0f0"></div>
<div class="abs" style="left:697px;top:315px;width:9px;height:77px;background:linear-gradient(to right,rgba(0,0,20,0.17),rgba(0,0,20,0))"></div>
<svg style="left:708px;top:369px;opacity:1;" width="16" height="16" viewBox="0 0 16 16"><use href="#i-new"/></svg>
<svg style="left:729px;top:369px;opacity:1;" width="16" height="16" viewBox="0 0 16 16"><use href="#i-open"/></svg>
<svg style="left:753.5px;top:369px;opacity:1;" width="16" height="16" viewBox="0 0 16 16"><use href="#i-save"/></svg>
<svg style="left:781.5px;top:369px;opacity:0.45;filter:grayscale(1);" width="16" height="16" viewBox="0 0 16 16"><use href="#i-cut"/></svg>
<svg style="left:803px;top:369px;opacity:0.45;filter:grayscale(1);" width="16" height="16" viewBox="0 0 16 16"><use href="#i-copy"/></svg>
<svg style="left:826px;top:369px;opacity:0.45;filter:grayscale(1);" width="16" height="16" viewBox="0 0 16 16"><use href="#i-paste"/></svg>
<svg style="left:855px;top:369px;opacity:1;" width="16" height="16" viewBox="0 0 16 16"><use href="#i-print"/></svg>
<svg style="left:878.5px;top:369px;opacity:1;" width="16" height="16" viewBox="0 0 16 16"><use href="#i-help"/></svg>
<div class="abs" style="left:776px;top:370px;width:1px;height:17px;background:#c8cad2"></div>
<div class="abs" style="left:849px;top:370px;width:1px;height:17px;background:#c8cad2"></div>
<svg style="left:0;top:0" width="1" height="1">
<path d="M791.5 693.5 V401.5 H1260 V693.5 Z" fill="none" stroke="#c8c8c8" stroke-width="2.5"/>
<line x1="783" y1="401.5" x2="791.5" y2="401.5" stroke="#c8c8c8" stroke-width="2.5"/>
<line x1="783" y1="459.9" x2="791.5" y2="459.9" stroke="#c8c8c8" stroke-width="2.5"/>
<line x1="783" y1="518.3" x2="791.5" y2="518.3" stroke="#c8c8c8" stroke-width="2.5"/>
<line x1="783" y1="576.7" x2="791.5" y2="576.7" stroke="#c8c8c8" stroke-width="2.5"/>
<line x1="783" y1="635.1" x2="791.5" y2="635.1" stroke="#c8c8c8" stroke-width="2.5"/>
<line x1="783" y1="693.5" x2="791.5" y2="693.5" stroke="#c8c8c8" stroke-width="2.5"/>
<line x1="791.5" y1="693.5" x2="791.5" y2="698.5" stroke="#c8c8c8" stroke-width="2.5"/>
<line x1="838.4" y1="693.5" x2="838.4" y2="697.5" stroke="#c8c8c8" stroke-width="2.5"/>
<line x1="865.8" y1="693.5" x2="865.8" y2="697.5" stroke="#c8c8c8" stroke-width="2.5"/>
<line x1="885.3" y1="693.5" x2="885.3" y2="697.5" stroke="#c8c8c8" stroke-width="2.5"/>
<line x1="900.4" y1="693.5" x2="900.4" y2="697.5" stroke="#c8c8c8" stroke-width="2.5"/>
<line x1="912.7" y1="693.5" x2="912.7" y2="697.5" stroke="#c8c8c8" stroke-width="2.5"/>
<line x1="923.2" y1="693.5" x2="923.2" y2="697.5" stroke="#c8c8c8" stroke-width="2.5"/>
<line x1="932.2" y1="693.5" x2="932.2" y2="697.5" stroke="#c8c8c8" stroke-width="2.5"/>
<line x1="940.2" y1="693.5" x2="940.2" y2="697.5" stroke="#c8c8c8" stroke-width="2.5"/>
<line x1="947.3" y1="693.5" x2="947.3" y2="698.5" stroke="#c8c8c8" stroke-width="2.5"/>
<line x1="994.2" y1="693.5" x2="994.2" y2="697.5" stroke="#c8c8c8" stroke-width="2.5"/>
<line x1="1021.6" y1="693.5" x2="1021.6" y2="697.5" stroke="#c8c8c8" stroke-width="2.5"/>
<line x1="1041.1" y1="693.5" x2="1041.1" y2="697.5" stroke="#c8c8c8" stroke-width="2.5"/>
<line x1="1056.2" y1="693.5" x2="1056.2" y2="697.5" stroke="#c8c8c8" stroke-width="2.5"/>
<line x1="1068.5" y1="693.5" x2="1068.5" y2="697.5" stroke="#c8c8c8" stroke-width="2.5"/>
<line x1="1079.0" y1="693.5" x2="1079.0" y2="697.5" stroke="#c8c8c8" stroke-width="2.5"/>
<line x1="1088.0" y1="693.5" x2="1088.0" y2="697.5" stroke="#c8c8c8" stroke-width="2.5"/>
<line x1="1096.0" y1="693.5" x2="1096.0" y2="697.5" stroke="#c8c8c8" stroke-width="2.5"/>
<line x1="1103.1" y1="693.5" x2="1103.1" y2="698.5" stroke="#c8c8c8" stroke-width="2.5"/>
<line x1="1150.0" y1="693.5" x2="1150.0" y2="697.5" stroke="#c8c8c8" stroke-width="2.5"/>
<line x1="1177.4" y1="693.5" x2="1177.4" y2="697.5" stroke="#c8c8c8" stroke-width="2.5"/>
<line x1="1196.9" y1="693.5" x2="1196.9" y2="697.5" stroke="#c8c8c8" stroke-width="2.5"/>
<line x1="1212.0" y1="693.5" x2="1212.0" y2="697.5" stroke="#c8c8c8" stroke-width="2.5"/>
<line x1="1224.3" y1="693.5" x2="1224.3" y2="697.5" stroke="#c8c8c8" stroke-width="2.5"/>
<line x1="1234.8" y1="693.5" x2="1234.8" y2="697.5" stroke="#c8c8c8" stroke-width="2.5"/>
<line x1="1243.8" y1="693.5" x2="1243.8" y2="697.5" stroke="#c8c8c8" stroke-width="2.5"/>
<line x1="1251.8" y1="693.5" x2="1251.8" y2="697.5" stroke="#c8c8c8" stroke-width="2.5"/>
<line x1="1260" y1="693.5" x2="1260" y2="698.5" stroke="#c8c8c8" stroke-width="2.5"/>
<polyline points="789.8,661.4 900.5,619.6 947,609.3 975.2,589 978.2,445.8 980.3,433 982.8,423 985.3,414.5 988,408 991,403.2 994,400.3 997,404.8 1000.3,411.2 1002.8,419 1004.8,430 1006.6,443 1008,459.8 1009,585.9 1015.3,592.9 1022.3,602.4 1032.5,611.5 1041.6,608 1049.3,622.7 1063.3,630.4 1069.3,626.2 1074.9,636 1224.6,695.3" fill="none" stroke="#0f8c8e" stroke-width="2.8" stroke-linejoin="round"/>
</svg>
<div class="axl" style="right:546px;top:395px;text-align:right">0dB</div>
<div class="axl" style="right:546px;top:453px;text-align:right">-20dB</div>
<div class="axl" style="right:546px;top:512px;text-align:right">-40dB</div>
<div class="axl" style="right:546px;top:570px;text-align:right">-60dB</div>
<div class="axl" style="right:546px;top:629px;text-align:right">-80dB</div>
<div class="axl" style="right:546px;top:687px;text-align:right">-100dB</div>
<div class="axl" style="left:770px;top:702px;width:44px;text-align:center">10<sup style="font-size:11px;vertical-align:4px;line-height:0">3</sup>Hz</div>
<div class="axl" style="left:925px;top:702px;width:44px;text-align:center">10<sup style="font-size:11px;vertical-align:4px;line-height:0">4</sup>Hz</div>
<div class="axl" style="left:1081px;top:702px;width:44px;text-align:center">10<sup style="font-size:11px;vertical-align:4px;line-height:0">5</sup>Hz</div>
<div class="axl" style="left:1237px;top:702px;width:44px;text-align:center">10<sup style="font-size:11px;vertical-align:4px;line-height:0">6</sup>Hz</div>
<div class="abs" style="left:706px;top:547px;width:20px;height:1px"><div style="position:absolute;left:-60px;top:-10px;width:140px;text-align:center;transform:rotate(-90deg);color:#0f8c8e;font-size:20.5px;line-height:20px;white-space:nowrap">v(g2)/1.4708</div></div></body></html>
